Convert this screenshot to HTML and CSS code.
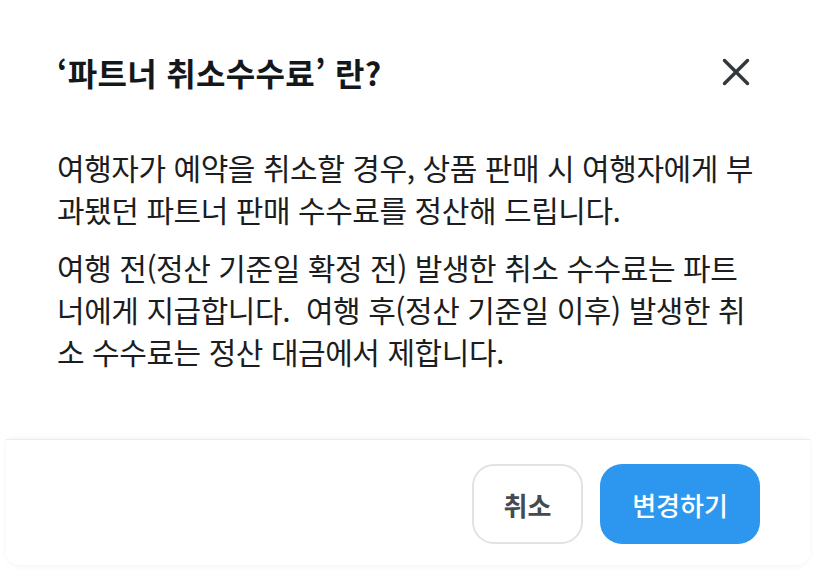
FILE: index.html
```html
<!DOCTYPE html>
<html lang="ko">
<head>
<meta charset="utf-8">
<link rel="stylesheet" href="styles.css">
</head>
<body>
<div class="modal">
  <div class="header">
    <h2 class="title">‘파트너 취소수수료’ 란?</h2>
    <button class="close" aria-label="닫기">
      <svg width="28" height="28" viewBox="0 0 28 28"><path d="M2.5 2.5L25.5 25.5M25.5 2.5L2.5 25.5" stroke="#32373d" stroke-width="3.4" stroke-linecap="round" fill="none"/></svg>
    </button>
  </div>
  <div class="content">
    <p>여행자가 예약을 취소할 경우, 상품 판매 시 여행자에게 부과됐던 파트너 판매 수수료를 정산해 드립니다.</p>
    <p>여행 전(정산 기준일 확정 전) 발생한 취소 수수료는 파트너에게 지급합니다.&nbsp; 여행 후(정산 기준일 이후) 발생한 취소 수수료는 정산 대금에서 제합니다.</p>
  </div>
  <div class="footer">
    <button class="btn btn-cancel">취소</button>
    <button class="btn btn-primary">변경하기</button>
  </div>
</div>
</body>
</html>
```
FILE: styles.css
```css
* { box-sizing: border-box; }
html, body { margin: 0; padding: 0; background: #fff; }
body { font-family: "Noto Sans CJK KR", "Noto Sans", sans-serif; color: #1b1d20; }
.modal { width: 816px; height: 572px; display: flex; flex-direction: column; }
.header { display: flex; justify-content: space-between; align-items: center; padding: 50px 66px 0 57px; }
.title { margin: 0; font-size: 32px; font-weight: 700; letter-spacing: 0.3px; line-height: 44px; color: #15181b; }
.close { border: 0; background: none; padding: 0; width: 28px; height: 28px; cursor: pointer; }
.close svg { display: block; }
.content { flex: 1; padding: 52px 52px 0 57px; }
.content p { margin: 0 0 16px 0; font-size: 30px; line-height: 42px; letter-spacing: -0.45px; }
.footer { margin: 0 6px 7px; border-top: 1px solid #ececec; border-radius: 0 0 14px 14px; box-shadow: 0 -6px 10px -6px rgba(0,0,0,0.06), 0 2px 6px rgba(0,0,0,0.04); display: flex; justify-content: flex-end; gap: 17px; padding: 24px 50px 21px; }
.btn { height: 80px; border-radius: 22px; font-family: inherit; font-size: 26px; font-weight: 500; cursor: pointer; }
.btn-cancel { width: 111px; background: #fff; border: 2px solid #dfe3e8; color: #454a50; font-weight: 700; }
.btn-primary { width: 160px; background: #2d97ef; border: 0; color: #fff; }
```
